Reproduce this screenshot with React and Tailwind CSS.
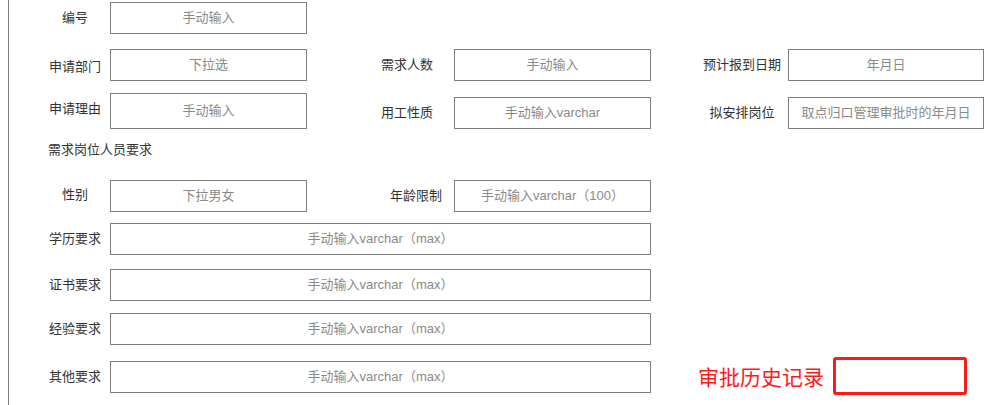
import React from "react";

const F = { fontFamily: '"Liberation Sans", "Noto Sans CJK SC", sans-serif' };

function Box({ w = "w-[197px]", h = "h-[32px]", text, extra = "" }) {
  return (
    <div
      className={`${w} ${h} ${extra} shrink-0 border border-[#7f7f7f] flex items-center justify-center text-[13px] text-[#8a8a8a] whitespace-nowrap`}
    >
      {text}
    </div>
  );
}

function Label({ cls, text }) {
  return (
    <div className={`${cls} shrink-0 flex items-center justify-center self-stretch text-[13px] text-[#333] whitespace-nowrap`}>
      {text}
    </div>
  );
}

export default function App() {
  return (
    <div className="w-[992px] h-[405px] bg-white overflow-hidden" style={F}>
      <div className="ml-[8px] h-full border-l border-[#7f7f7f] flex flex-col">
        {/* Row 1 */}
        <div className="mt-[2px] h-[32px] flex">
          <Label cls="ml-[31px] w-[70px]" text="编号" />
          <Box text="手动输入" />
        </div>
        {/* Row 2 */}
        <div className="mt-[15px] h-[32px] flex">
          <Label cls="ml-[31px] w-[70px] pt-[4px]" text="申请部门" />
          <Box text="下拉选" />
          <Label cls="ml-[53px] w-[94px]" text="需求人数" />
          <Box text="手动输入" />
          <Label cls="ml-[45px] w-[92px]" text="预计报到日期" />
          <Box w="w-[196px]" text="年月日" />
        </div>
        {/* Row 3 */}
        <div className="mt-[12px] h-[36px] flex items-end">
          <Label cls="ml-[31px] w-[70px] pb-[5px]" text="申请理由" />
          <Box h="h-[36px]" text="手动输入" />
          <div className="flex h-[32px]">
            <Label cls="ml-[53px] w-[94px]" text="用工性质" />
            <Box text="手动输入varchar" />
            <Label cls="ml-[45px] w-[92px]" text="拟安排岗位" />
            <Box w="w-[196px]" text="取点归口管理审批时的年月日" />
          </div>
        </div>
        {/* Heading */}
        <div className="mt-[11px] h-[20px] leading-[20px] ml-[39px] text-[13px] text-[#333]">
          需求岗位人员要求
        </div>
        {/* Row 4 */}
        <div className="mt-[20px] h-[32px] flex">
          <Label cls="ml-[31px] w-[70px] pb-[3px]" text="性别" />
          <Box text="下拉男女" />
          <div className="w-[147px] shrink-0 flex items-center justify-end pr-[12px] text-[13px] text-[#333]">
            年龄限制
          </div>
          <Box text="手动输入varchar（100）" />
        </div>
        {/* Row 5 */}
        <div className="mt-[11px] h-[32px] flex">
          <Label cls="ml-[31px] w-[70px]" text="学历要求" />
          <Box w="w-[541px]" text="手动输入varchar（max）" />
        </div>
        {/* Row 6 */}
        <div className="mt-[14px] h-[32px] flex">
          <Label cls="ml-[31px] w-[70px]" text="证书要求" />
          <Box w="w-[541px]" text="手动输入varchar（max）" />
        </div>
        {/* Row 7 */}
        <div className="mt-[12px] h-[32px] flex">
          <Label cls="ml-[31px] w-[70px]" text="经验要求" />
          <Box w="w-[541px]" text="手动输入varchar（max）" />
        </div>
        {/* Row 8 */}
        <div className="mt-[12px] h-[38px] flex items-start">
          <div className="ml-[31px] w-[70px] h-[32px] mt-[4px] shrink-0 flex items-center justify-center text-[13px] text-[#333]">
            其他要求
          </div>
          <Box w="w-[541px]" extra="mt-[4px]" text="手动输入varchar（max）" />
          <div className="ml-[47px] h-[38px] flex items-center text-[21px] text-[#ff1a1a] leading-none whitespace-nowrap" style={{ fontFamily: '"Noto Sans CJK SC", sans-serif' }}>
            审批历史记录
          </div>
          <div className="ml-[9px] w-[134px] h-[38px] shrink-0 border-[3px] border-[#ff1a1a] rounded-[3px]" />
        </div>
      </div>
    </div>
  );
}
